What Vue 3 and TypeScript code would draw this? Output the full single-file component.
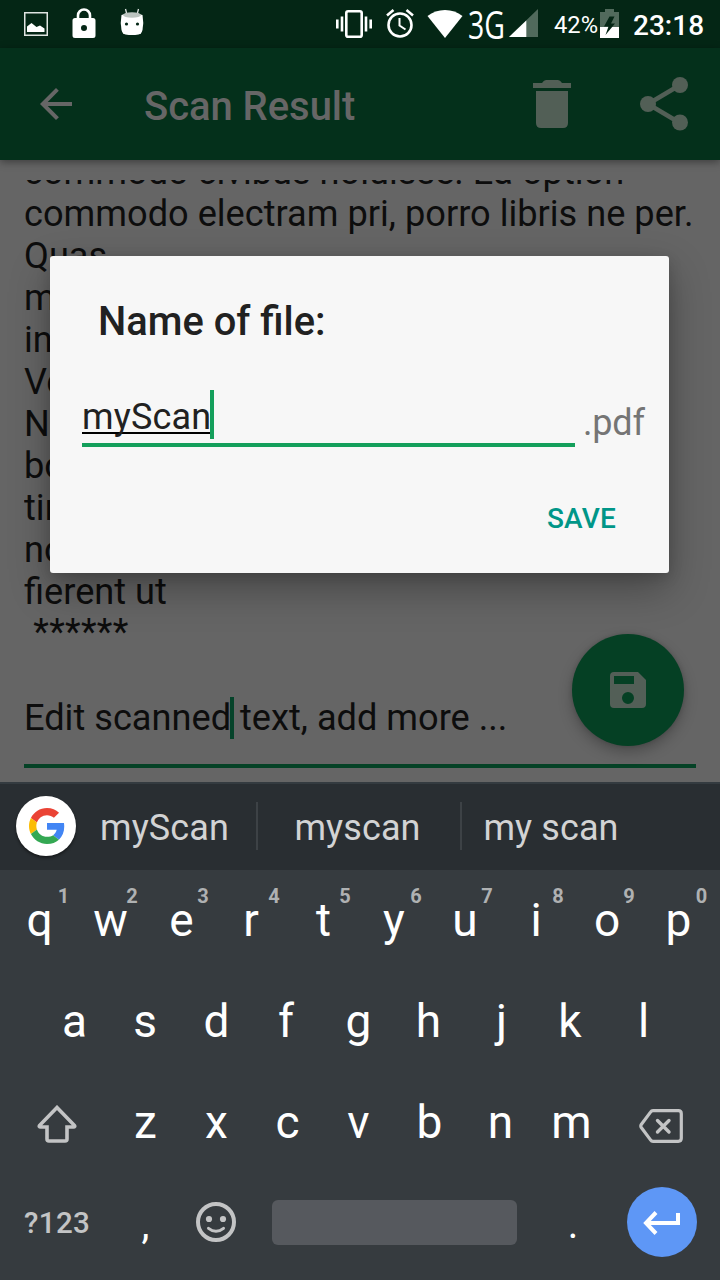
<script setup lang="ts">
interface Key {
  label: string
  hint?: string
}

const scannedLines: string[] = [
  'commodo civibus noluisse. Ea option',
  'commodo electram pri, porro libris ne per.',
  'Quas',
  'mel',
  'in',
  'Vel',
  'No',
  'bo',
  'tim',
  'no',
  'fierent ut',
  ' ******',
  ' ',
]

const suggestions: string[] = ['myScan', 'myscan', 'my scan']

const topRow: Key[] = [...'qwertyuiop'].map((label, i) => ({ label, hint: String((i + 1) % 10) }))
const homeRow: Key[] = [...'asdfghjkl'].map((label) => ({ label }))
const bottomRow: Key[] = [...'zxcvbnm'].map((label) => ({ label }))
</script>

<template>
  <div class="phone">
    <header class="status">
      <svg class="st-picture" width="24" height="24" viewBox="0 0 24 24">
        <rect x=".75" y=".75" width="22.5" height="22.5" fill="none" stroke="#dfe4e1" stroke-width="1.5" />
        <path d="M3 20v-5.500l4.500-3.500 5 4 3.500-1.500 4.500 3v3.500z" fill="#fff" />
      </svg>
      <svg class="st-lock" width="24" height="30" viewBox="0 0 24 30">
        <path d="M6 12V7.500a6 6 0 0 1 12 0V12" fill="none" stroke="#fff" stroke-width="2.600" />
        <path fill-rule="evenodd" fill="#fff" d="M3 10h18q2.500 0 2.500 2.500v15q0 2.500-2.500 2.500H3q-2.500 0-2.500-2.500v-15Q.5 10 3 10zm9 7a3 3 0 1 0 0 6 3 3 0 0 0 0-6z" />
      </svg>
      <svg class="st-droid" width="24" height="28" viewBox="0 0 24 28">
        <path d="M5.500 1l1.300 5M18.500 1l-1.300 5" stroke="#dfe4e1" stroke-width="1.300" />
        <path d="M1.500 7Q12 3 22.500 7q1.500 8 0 15-1 4-4 4.500-6.500 1-13 0-3-.5-4-4.500-1.500-7 0-15z" fill="#fff" />
        <ellipse cx="12" cy="7" rx="9" ry="2.800" fill="#bcc5c0" />
        <circle cx="6.500" cy="16" r="1.600" fill="#042615" />
        <circle cx="17.500" cy="16" r="1.600" fill="#042615" />
      </svg>

      <svg class="st-vibrate" width="36" height="28" viewBox="0 0 36 28">
        <rect x="10.300" y="1.300" width="15.400" height="25.400" rx="1.800" fill="none" stroke="#fff" stroke-width="2.600" />
        <path d="M6 6.500v15M30 6.500v15M1.300 9.500v9M34.700 9.500v9" stroke="#fff" stroke-width="2.600" />
      </svg>
      <svg class="st-alarm" width="28" height="29" viewBox="0 0 28 29">
        <circle cx="14" cy="16" r="11.500" fill="none" stroke="#fff" stroke-width="2.600" />
        <path d="M1 6.500L7.500 1M27 6.500L20.500 1" stroke="#fff" stroke-width="2.600" />
        <path d="M13.500 9v7.500l6 4" fill="none" stroke="#fff" stroke-width="2" />
      </svg>
      <svg class="st-wifi" width="36" height="28" viewBox="0 0 36 28">
        <path d="M18 28L.5 6Q8 0 18 0t17.500 6z" fill="#fff" />
      </svg>
      <span class="network">3G</span>
      <svg class="st-signal" width="29" height="28" viewBox="0 0 29 28">
        <path d="M29 0v28H0z" fill="#516a5c" />
        <path d="M17.300 11.500V28H0z" fill="#fff" />
      </svg>
      <span class="percent">42%</span>
      <svg class="st-battery" width="19" height="29" viewBox="0 0 19 29">
        <path d="M5 0h9v3h5v15H0V3h5z" fill="#516a5c" />
        <path d="M0 18h19v11H0z" fill="#fff" />
        <path d="M9.500 7.500L4 17.500h4.500L5.500 26 15 14.500h-4l3.500-7z" fill="#042615" />
      </svg>
      <span class="clock">23:18</span>
    </header>

    <div class="appbar">
      <svg class="back" width="32" height="32" viewBox="0 0 32 32">
        <path d="M32 14v4H7.700l11.200 11.200L16 32 0 16 16 0l2.800 2.800L7.700 14z" fill="#666" />
      </svg>
      <h1>Scan Result</h1>
      <svg class="trash" width="38" height="48" viewBox="0 0 38 48">
        <path d="M3 11h32v32q0 5-5 5H8q-5 0-5-5zM0 3h9q2-3 4-3h12q2 0 4 3h9v5H0z" fill="#525f56" />
      </svg>
      <svg class="share" width="48" height="54" viewBox="0 0 48 54">
        <path d="M40 8L8 27l32 19" fill="none" stroke="#525f56" stroke-width="4.600" />
        <circle cx="40" cy="8" r="8" fill="#525f56" />
        <circle cx="8" cy="27" r="8" fill="#525f56" />
        <circle cx="40" cy="45.500" r="8" fill="#525f56" />
      </svg>
    </div>

    <main class="content">
      <div class="scan-view">
        <div class="scan-text">
          <p v-for="(line, i) in scannedLines" :key="i" :class="{ stars: line.includes('*') }">{{ line }}</p>
          <p>Edit scanned<i class="caret"></i> text, add more ...</p>
        </div>
      </div>
      <div class="rule"></div>
      <button class="fab">
        <svg width="36" height="36" viewBox="0 0 36 36">
          <path fill-rule="evenodd" d="M4 0h24l8 8v24q0 4-4 4H4q-4 0-4-4V4q0-4 4-4zm0 4v8h20V4zm14 16a6 6 0 1 0 0 12 6 6 0 0 0 0-12z" fill="#535f57" />
        </svg>
      </button>
    </main>

    <section class="keyboard">
      <div class="suggestions">
        <span class="google">
          <svg width="36" height="36" viewBox="0 0 48 48">
            <path fill="#EA4335" d="M24 9.500c3.540 0 6.710 1.220 9.210 3.600l6.850-6.850C35.900 2.380 30.470 0 24 0 14.620 0 6.510 5.380 2.560 13.220l7.980 6.190C12.430 13.720 17.740 9.500 24 9.500z" />
            <path fill="#4285F4" d="M46.980 24.550c0-1.570-.15-3.090-.38-4.550H24v9.020h12.940c-.58 2.960-2.260 5.480-4.780 7.180l7.730 6c4.510-4.180 7.090-10.360 7.090-17.650z" />
            <path fill="#FBBC05" d="M10.530 28.590c-.48-1.450-.76-2.990-.76-4.590s.27-3.140.76-4.590l-7.980-6.190C.92 16.460 0 20.120 0 24c0 3.880.92 7.540 2.560 10.780l7.970-6.190z" />
            <path fill="#34A853" d="M24 48c6.480 0 11.930-2.130 15.890-5.810l-7.730-6c-2.150 1.450-4.920 2.300-8.160 2.300-6.260 0-11.570-4.220-13.470-9.910l-7.980 6.190C6.510 42.620 14.620 48 24 48z" />
          </svg>
        </span>
        <span v-for="word in suggestions" :key="word" class="word">{{ word }}</span>
      </div>

      <div class="row top">
        <span v-for="key in topRow" :key="key.label" class="key">{{ key.label }}<sup>{{ key.hint }}</sup></span>
      </div>
      <div class="row home">
        <span v-for="key in homeRow" :key="key.label" class="key">{{ key.label }}</span>
      </div>
      <div class="row bottom">
        <span class="wide shift">
          <svg width="40" height="38" viewBox="0 0 40 38">
            <path d="M20 2.500L2.500 20.500q-.8 1.500 1 1.500H10v12q0 2 2 2h16q2 0 2-2V22h6.500q1.800 0 1-1.500z" fill="none" stroke="#c3c4c5" stroke-width="3.600" />
          </svg>
        </span>
        <span v-for="key in bottomRow" :key="key.label" class="key">{{ key.label }}</span>
        <span class="wide erase">
          <svg width="44" height="34" viewBox="0 0 44 34">
            <path d="M14 1.700h25.300q3 0 3 3v24.600q0 3-3 3H14q-1.500 0-2.500-1.500L2.300 18.500q-1-1.500 0-3L11.500 3.200q1-1.500 2.500-1.500z" fill="none" stroke="#c3c4c5" stroke-width="3.200" />
            <path d="M18.500 11.500L30 23M30 11.500L18.500 23" stroke="#c3c4c5" stroke-width="3.400" stroke-linecap="round" />
          </svg>
        </span>
      </div>
      <div class="row last">
        <span class="symbols">?123</span>
        <span class="key comma">,</span>
        <span class="key smile">
          <svg width="40" height="40" viewBox="0 0 40 40">
            <circle cx="20" cy="20" r="18" fill="none" stroke="#c3c4c5" stroke-width="4" />
            <circle cx="13" cy="17" r="3.100" fill="#c3c4c5" />
            <circle cx="27" cy="17" r="3.100" fill="#c3c4c5" />
            <path d="M12.500 26.300q7.500 6 15 0" fill="none" stroke="#c3c4c5" stroke-width="3" stroke-linecap="round" />
          </svg>
        </span>
        <span class="space"></span>
        <span class="key period">.</span>
        <span class="enter">
          <svg width="38" height="24" viewBox="0 0 38 24">
            <path d="M35 2v10H3M13 1.500L3 12l10 10.500" fill="none" stroke="#fff" stroke-width="4" />
          </svg>
        </span>
      </div>
    </section>

    <div class="dialog">
      <h2>Name of file:</h2>
      <div class="field-row">
        <div class="field"><span class="composing">myScan</span><i class="field-caret"></i></div>
        <span class="ext">.pdf</span>
      </div>
      <button class="save">SAVE</button>
    </div>
  </div>
</template>

<style>
html,
body {
  margin: 0;
  background: #363b3f;
}
</style>

<style scoped>
* {
  box-sizing: border-box;
}
.phone {
  position: relative;
  display: flex;
  flex-direction: column;
  width: 720px;
  height: 1280px;
  overflow: hidden;
  background: #656565;
  font-family: Roboto, "Liberation Sans", sans-serif;
}
svg {
  display: block;
  flex: none;
}
button {
  border: 0;
  padding: 0;
  font-family: inherit;
}
.status {
  flex: none;
  display: flex;
  align-items: flex-start;
  height: 48px;
  background: #042615;
  color: #fff;
}
.st-picture { margin: 12px 0 0 24px; }
.st-lock { margin: 8px 0 0 24px; }
.st-droid { margin: 8px 0 0 24px; }
.st-vibrate { margin: 10px 0 0 192px; }
.st-alarm { margin: 9px 0 0 14px; }
.st-wifi { margin: 10px 0 0 13px; }
.network {
  flex: none;
  width: 50px;
  margin: 1px -13px 0 5px;
  font: 500 37.500px/48px "Open Sans", sans-serif;
  transform: scaleX(0.76);
  transform-origin: 0 50%;
}
.st-signal { margin: 9px 0 0 4px; }
.percent {
  width: 45px;
  margin-left: 16px;
  font-size: 23.700px;
  line-height: 50px;
}
.st-battery { margin: 9px 0 0 1px; }
.clock {
  margin-left: 14px;
  font-size: 28px;
  font-weight: 500;
  line-height: 51px;
}
.appbar {
  position: relative;
  z-index: 1;
  flex: none;
  display: flex;
  align-items: flex-start;
  height: 112px;
  background: #04301b;
  box-shadow: 0 2px 8px rgba(0, 0, 0, 0.4);
}
.back { margin: 40px 0 0 40px; }
h1 {
  width: 389px;
  margin: 0 0 0 72px;
  font-size: 40px;
  font-weight: 500;
  line-height: 118px;
  letter-spacing: -0.050px;
  color: #666;
}
.trash { margin: 32px 0 0; }
.share { margin: 29px 0 0 69px; }
.content {
  position: relative;
  flex: none;
  height: 622px;
  padding: 20px 24px 0;
}
.scan-view {
  height: 584px;
  overflow: hidden;
}
.scan-text {
  margin-top: -29px;
  font-size: 36.180px;
  line-height: 42px;
  color: #0d0d0d;
}
.scan-text p {
  height: 42px;
  margin: 0;
  white-space: pre;
}
.scan-text .stars {
  line-height: 37px;
  letter-spacing: 0.300px;
}
.caret {
  display: inline-block;
  width: 4px;
  height: 42px;
  margin: 0 -3px 0 -1px;
  vertical-align: top;
  background: #05432a;
}
.rule {
  height: 4px;
  background: #054226;
}
.fab {
  position: absolute;
  right: 36px;
  top: 474px;
  display: flex;
  align-items: center;
  justify-content: center;
  width: 112px;
  height: 112px;
  border-radius: 50%;
  background: #054024;
  box-shadow: 0 6px 14px rgba(0, 0, 0, 0.25), 0 0 4px rgba(0, 0, 0, 0.15);
}
.keyboard {
  position: relative;
  flex: 1;
  background: #363b3f;
  color: #fff;
}
.suggestions {
  display: flex;
  align-items: center;
  height: 88px;
  padding-left: 16px;
  border-top: 2px solid #343b40;
  background: #292e32;
}
.google {
  display: flex;
  align-items: center;
  justify-content: center;
  width: 60px;
  height: 60px;
  margin-bottom: 2px;
  padding-left: 1px;
  border-radius: 50%;
  background: #fff;
  box-shadow: 0 2px 3px rgba(0, 0, 0, 0.45);
}
.word {
  height: 48px;
  margin-bottom: 2px;
  font-size: 36px;
  line-height: 52px;
  letter-spacing: 0.100px;
  color: #d2d3d4;
  text-align: center;
}
.word:nth-child(2) { width: 182px; padding-right: 3px; border-right: 2px solid #3d4246; }
.word:nth-child(3) { width: 204px; padding-right: 3px; border-right: 2px solid #3d4246; }
.word:nth-child(4) { width: 178px; }
.row {
  display: flex;
  align-items: center;
  height: 101px;
}
.key {
  position: relative;
  display: flex;
  align-items: center;
  justify-content: center;
  width: 71px;
  height: 101px;
  font-size: 46px;
  line-height: 101px;
}
sup {
  position: absolute;
  left: 50%;
  top: 14px;
  width: 43px;
  font-size: 20px;
  font-weight: 700;
  line-height: 24px;
  text-align: center;
  color: #afb1b2;
}
.top { padding-left: 4px; }
.top .key:first-child sup { width: 48px; }
.top .key:last-child sup { width: 46px; }
.top .key:nth-child(4) { padding-right: 3px; }
.top .key:nth-child(n + 6) { padding-right: 1px; }
.top .key:last-child { padding-right: 0; }
.home { padding-left: 39px; }
.home .key:nth-child(2) { padding-right: 1px; }
.home .key:nth-child(4) { padding-right: 3px; }
.home .key:nth-child(6) { padding-right: 2px; }
.home .key:nth-child(8) { padding-right: 3px; }
.home .key:nth-child(7) { padding-left: 2px; }
.home .key:nth-child(9) { padding-left: 2px; }
.wide {
  display: flex;
  align-items: center;
}
.shift { width: 110px; padding: 2px 0 0 37px; }
.erase { padding: 6px 0 0 32px; }
.last { height: 98px; }
.last .key { height: 98px; line-height: 98px; }
.symbols {
  width: 110px;
  padding: 1px 0 0 24px;
  font-size: 29.500px;
  font-weight: 500;
  letter-spacing: 0.400px;
  color: #c3c4c5;
}
.last .comma,
.last .period {
  padding-top: 6px;
  font-size: 40px;
}
.last .period { padding-left: 1px; }
.smile { padding-right: 2px; }
.space {
  width: 245px;
  height: 45px;
  margin: 0 20px 0 20px;
  border-radius: 6px;
  background: #56595e;
}
.enter {
  display: flex;
  align-items: center;
  justify-content: center;
  width: 70px;
  height: 70px;
  margin-left: 19px;
  padding: 2px 1px 0 0;
  border-radius: 50%;
  background: #5e97f6;
}
.dialog {
  position: absolute;
  z-index: 2;
  left: 50px;
  top: 256px;
  width: 619px;
  height: 317px;
  padding: 0 24px 0 32px;
  border-radius: 3px;
  background: #f7f7f7;
  box-shadow: 0 16px 40px rgba(0, 0, 0, 0.3), 0 4px 14px rgba(0, 0, 0, 0.15);
}
h2 {
  margin: 43px 0 0 16px;
  font-size: 39.850px;
  font-weight: 500;
  line-height: 46px;
  color: #212121;
}
.field-row {
  display: flex;
  align-items: flex-start;
  height: 57px;
  margin-top: 45px;
}
.field {
  flex: none;
  display: flex;
  width: 493px;
  height: 57px;
  border-bottom: 4px solid #149f5b;
  font-size: 36px;
  line-height: 55px;
  letter-spacing: 0.150px;
  color: #212121;
}
.composing {
  height: 44px;
  border-bottom: 2px solid #000;
}
.field-caret {
  width: 4px;
  height: 49px;
  margin-left: -1px;
  background: #149f5b;
}
.ext {
  margin-left: 8px;
  font-size: 36px;
  line-height: 67px;
  letter-spacing: -0.200px;
  color: #757575;
}
.save {
  display: block;
  height: 36px;
  margin: 54px 29px 0 auto;
  font-size: 28px;
  font-weight: 500;
  line-height: 36px;
  letter-spacing: 0.200px;
  color: #009688;
  background: none;
}
</style>
